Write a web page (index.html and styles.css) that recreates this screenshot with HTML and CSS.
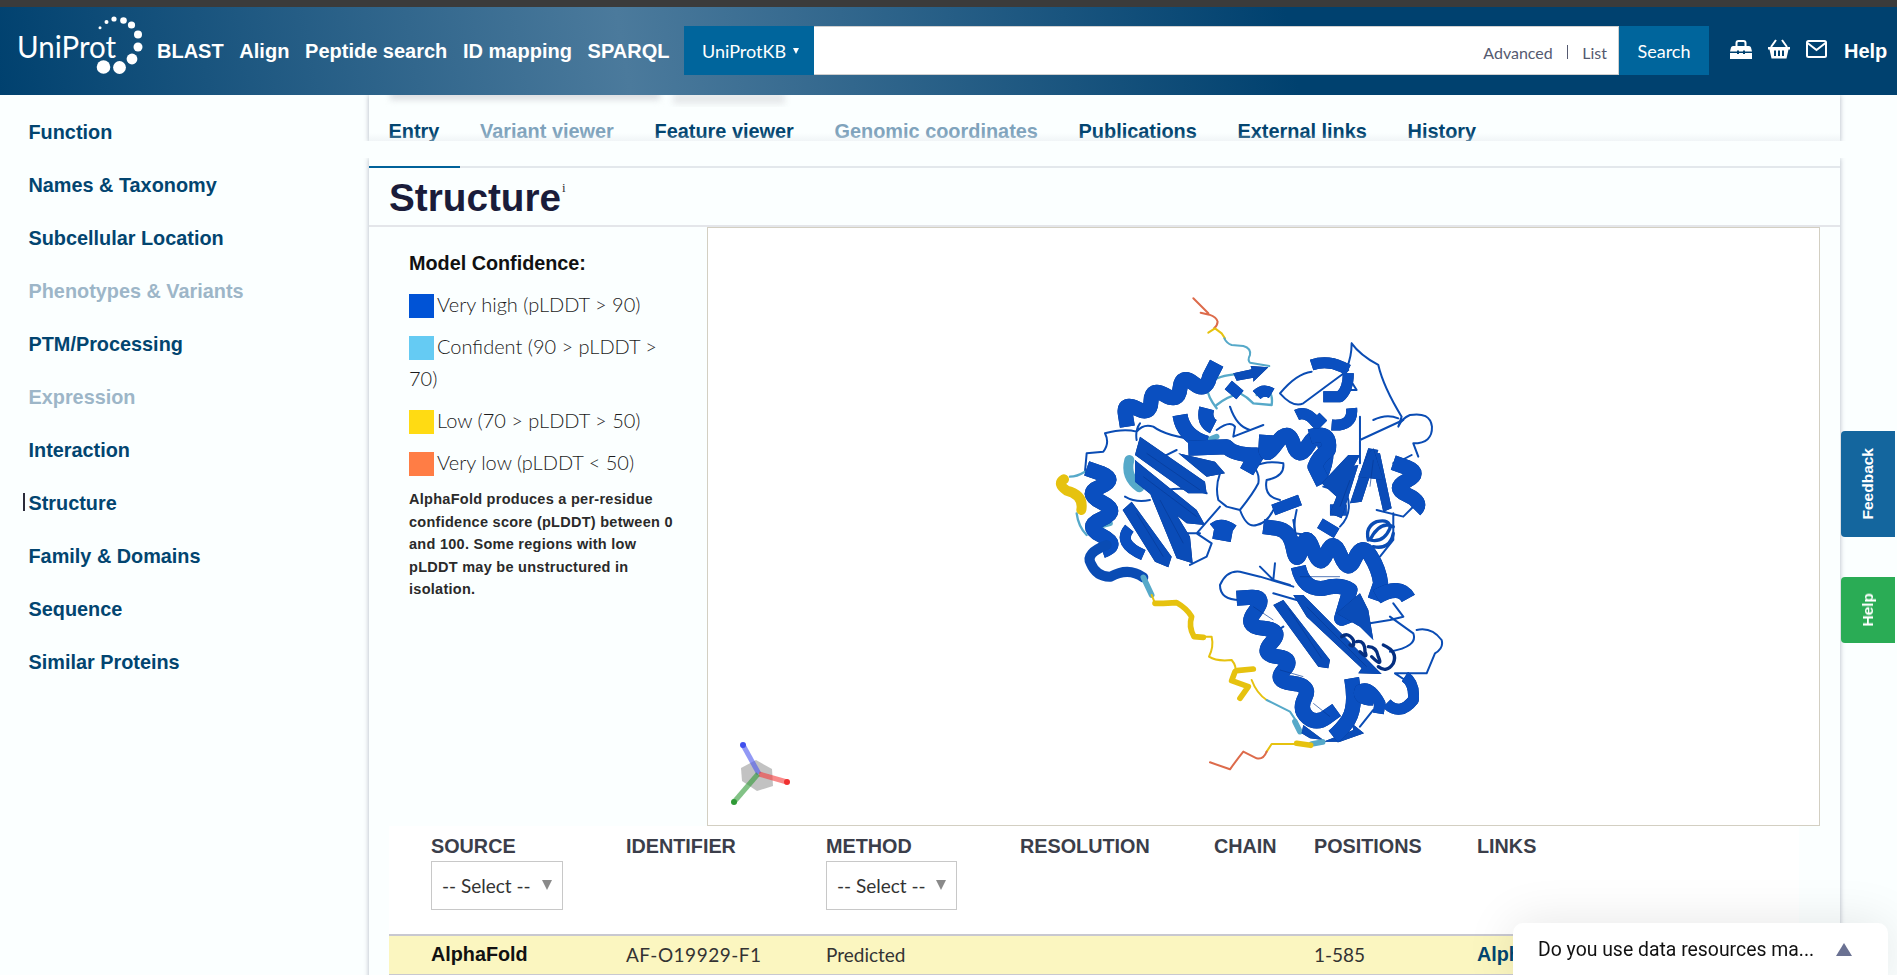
FILE: index.html
```html
<!DOCTYPE html>
<html lang="en">
<head>
<meta charset="utf-8">
<title>UniProt - Structure</title>
<link rel="stylesheet" href="styles.css">
</head>
<body>
<div class="chrome-strip"></div>
<header class="topbar">
  <a class="logo">
    <svg width="150" height="88" viewBox="0 7 150 88">
      <text class="logo-word" x="17" y="58" textLength="99" lengthAdjust="spacingAndGlyphs">UniProt</text>
      <g class="logo-dots">
        <circle cx="100" cy="27.7" r="1.5"/><circle cx="106.5" cy="22" r="2"/><circle cx="114" cy="19" r="2.6"/>
        <circle cx="123.5" cy="20.5" r="3.3"/><circle cx="131.5" cy="25" r="3.6"/><circle cx="138" cy="34.5" r="4"/>
        <circle cx="138" cy="47" r="4.5"/><circle cx="132" cy="59" r="5.4"/><circle cx="119.5" cy="67.5" r="6.4"/><circle cx="103.5" cy="67" r="6.8"/>
      </g>
    </svg>
  </a>
  <nav class="topnav">
    <a>BLAST</a><a>Align</a><a>Peptide search</a><a>ID mapping</a><a>SPARQL</a>
  </nav>
  <div class="search">
    <div class="search-db">UniProtKB <span class="search-caret"></span></div>
    <div class="search-input"><a>Advanced</a><span class="search-sep"></span><a>List</a></div>
    <div class="search-btn">Search</div>
  </div>
  <div class="tools">
    <svg class="tool" width="22" height="19" viewBox="0 0 22 19"><path class="tool-line" d="M6.5 6V3Q6.500 1 8.500 1H13.500Q15.500 1 15.500 3V6"/><path d="M0 11.500L1 7.500Q1.500 6 3 6H19Q20.500 6 21 7.500L22 11.500H15V10.500H13V11.500H9V10.500H7V11.500Z"/><path d="M0 13H7V14H9V13H13V14H15V13H22V19H0Z"/></svg>
    <svg class="tool" width="22" height="20" viewBox="0 0 22 20"><path class="tool-line" d="M8 1L3 8M14 1L19 8"/><path fill-rule="evenodd" d="M0 8H22V10.500H20.500L18.500 19.500H3.500L1.500 10.500H0ZM6 11.500V17H8V11.500ZM10 11.500V17H12V11.500ZM14 11.500V17H16V11.500Z"/></svg>
    <svg class="tool" width="21" height="18" viewBox="0 0 21 18"><rect class="tool-line" x="1" y="1" width="19" height="16" rx="1.500"/><path class="tool-line" d="M1.500 3L10.500 10L19.500 3"/></svg>
    <a class="tool-help">Help</a>
  </div>
</header>

<div class="page">
  <aside class="sidebar">
    <a>Function</a>
    <a>Names &amp; Taxonomy</a>
    <a>Subcellular Location</a>
    <a class="off">Phenotypes &amp; Variants</a>
    <a>PTM/Processing</a>
    <a class="off">Expression</a>
    <a>Interaction</a>
    <a class="current">Structure</a>
    <a>Family &amp; Domains</a>
    <a>Sequence</a>
    <a>Similar Proteins</a>
  </aside>

  <main class="main">
    <div class="tabs-card">
      <div class="blur-row"><span class="blur-a"></span><span class="blur-b"></span></div>
      <div class="tabs">
        <a>Entry</a><a class="off">Variant viewer</a><a>Feature viewer</a><a class="off">Genomic coordinates</a><a>Publications</a><a>External links</a><a>History</a>
      </div>
    </div>

    <section class="section">
      <div class="section-head"><h1>Structure</h1><sup>i</sup></div>
      <div class="section-body">
        <div class="legend">
          <h2>Model Confidence:</h2>
          <p class="legend-row"><span class="swatch vh"></span>Very high (pLDDT &gt; 90)</p>
          <p class="legend-row"><span class="swatch c"></span>Confident (90 &gt; pLDDT &gt; 70)</p>
          <p class="legend-row"><span class="swatch lo"></span>Low (70 &gt; pLDDT &gt; 50)</p>
          <p class="legend-row"><span class="swatch vl"></span>Very low (pLDDT &lt; 50)</p>
          <p class="legend-note">AlphaFold produces a per-residue confidence score (pLDDT) between 0 and 100. Some regions with low pLDDT may be unstructured in isolation.</p>
        </div>
        <div class="viewer">
          <svg class="viewer-svg" width="1111" height="597" viewBox="708 228 1111 597">
            <g transform="translate(1040 280) scale(.3333)">
              <!-- top terminal -->
              <path class="s o" d="M460 55L505 100M482 98L508 104Q530 112 533 125Q532 138 522 145"/>
              <path class="s y" d="M505 158L525 145L545 160L555 175"/>
              <path class="s c2" d="M553 175Q560 190 575 195L610 198Q634 205 630 225Q622 240 630 248L688 258"/>
              <!-- loops -->
              <path class="s b" d="M935 190Q935 230 920 265M935 190Q960 225 1015 255Q1030 320 1085 410L1075 440Q1085 415 1110 405Q1170 395 1176 440Q1178 490 1120 490L1135 530M1000 420Q1040 400 1075 415M720 340Q770 280 815 275M720 340Q760 385 790 370Q870 310 925 270M925 290L950 330L910 330"/>
              <path class="s b" d="M195 460Q210 490 190 515L140 520L135 575M195 460Q250 445 290 455Q310 430 340 440Q380 470 480 480M300 430Q285 450 290 480M530 450Q570 420 585 440L580 470L670 435M570 380Q590 440 630 450M540 580Q525 620 535 660L560 680L600 690Q640 640 655 610Q660 580 640 560Q680 540 730 550Q735 590 680 600Q670 650 720 660M600 690Q620 745 650 735Q680 730 700 690M540 680L470 760L515 790L500 830L450 855M480 760L440 760M770 690Q760 730 765 760L800 765M900 740Q940 700 920 640L850 620M960 480L1090 420M960 410L960 550M1010 690L1090 710L1130 670M1060 700L1060 780L1020 830M330 590L380 630Q440 620 500 640M255 650Q290 670 330 660M410 510L370 530M1115 525Q1090 540 1060 550"/>
              <!-- cyan around top -->
              <path class="s c2 t" d="M530 385Q495 340 505 315Q520 290 582 283M530 375Q560 350 600 340Q620 350 640 370L695 375Q700 340 680 330Q660 330 650 345M110 700Q115 740 140 765M135 575Q110 590 90 590"/>
              <path class="r c" d="M268 540Q255 590 298 622" />
              <path class="r2 c" d="M170 740L210 730M480 490L530 470"/>
              <!-- yellow left -->
              <path class="r y" d="M72 598Q50 612 80 632Q132 645 124 690"/>
              <!-- top arrow -->
              <path class="f" d="M580 280L635 268L632 258L685 262L640 305L640 293L590 302Z"/>
              <!-- helices -->
              <path class="h" d="M262 440L256 402Q250 365 291 386T333 364T375 345T420 325T461 310T509 290L530 250"/>
              <path class="h m" d="M565 315L600 345M650 345Q670 325 695 340"/>
              <path class="h" d="M420 405Q430 470 500 490M500 385Q490 425 520 440"/>
              <path class="h" d="M445 505L560 500Q580 525 650 525Q640 540 620 575"/>
              <path class="h" d="M680 465L678 500Q675 540 710 490T760 492T805 495T852 487T840 590"/>
              <path class="h" d="M810 470Q875 450 865 510Q835 530 825 560L850 610"/>
              <path class="h m" d="M815 255Q860 240 905 260L925 270M925 280Q925 330 900 350L850 350M770 405Q800 390 830 430L850 410M875 435Q940 440 935 385"/>
              <path class="h" d="M1060 548L1100 562Q1145 580 1100 602T1102 645T1125 690"/>
              <path class="h" d="M140 565L183 580Q232 600 181 620T185 667T185 717T185 767T187 812"/>
              <path class="h m" d="M268 745Q230 790 310 825"/>
              <path class="h m" d="M840 730L890 760M520 745Q545 725 580 750M520 760L575 770"/>
              <path class="h m" d="M700 690L780 660M870 690L920 690"/>
              <!-- sheets -->
              <path class="f" d="M300 470L495 605L500 640L445 640L285 525ZM285 540L470 690L495 735L440 730L285 605ZM415 520L525 545L555 580L500 590ZM248 690L275 665L395 830L385 862L345 845ZM330 640L360 622L450 770L458 850L410 835Z"/>
              <path class="f" d="M845 610L925 525L960 525L890 650ZM870 700L925 560L955 555L905 715ZM930 670L985 505L1015 510L965 665ZM1030 695L990 520L1020 520L1055 685Z"/>
              <path class="f" d="M985 520L1000 505L1030 600L955 590Z"/>
              <!-- coil -->
              <path class="s b th" d="M985 780Q975 740 1010 725Q1050 715 1050 745Q1030 790 990 780Q1020 720 1060 740M1000 800Q1050 810 1060 760"/>
              <path class="seam" d="M320 520L480 630M310 590L470 710M290 700L370 830M360 660L430 790M930 600L900 680M1000 540L990 620"/>
            </g>
            <g transform="translate(1040 520) scale(.3333)">
              <!-- long tail -->
              <path class="r b" d="M200 75Q135 100 152 130Q170 172 212 170Q265 140 310 172"/>
              <path class="r2 c" d="M310 172L335 225"/>
              <path class="r2 y" d="M345 250L370 250L410 248Q440 265 455 290Q445 320 462 350L490 352"/>
              <path class="s y" d="M335 225L345 250M490 350L515 350Q522 380 507 410Q530 425 575 420Q592 440 585 460"/>
              <path class="r2 y" d="M590 452L640 447M585 455L575 482L625 500L600 535"/>
              <path class="s y" d="M635 480Q650 520 680 540"/>
              <path class="s c2" d="M680 540L750 575L770 605"/>
              <path class="r2 c" d="M765 605L780 635"/>
              <path class="f" d="M790 615L850 660L810 655L785 640Z"/>
              <path class="f" d="M850 665L940 630L935 610L972 640L900 665Z"/>
              <path class="r2 c" d="M815 672L848 666"/>
              <path class="r2 y" d="M770 670L812 676"/>
              <path class="s y" d="M770 672L695 672L680 695"/>
              <path class="s o" d="M680 695Q670 720 650 715L610 695Q590 720 570 748L510 727"/>
              <!-- lower loops -->
              <path class="s b" d="M600 240Q540 240 540 195Q560 150 600 155L660 170L760 200M770 60L760 0M660 140L700 180L750 195M705 130L700 180M1130 330Q1175 320 1205 360Q1212 385 1185 400L1160 460L1065 460L1095 480M1050 290L1120 340Q1135 380 1050 395M1060 250L1090 290L1050 300L990 310M1000 570L960 620M700 220L770 240M730 320L700 340"/>
              <!-- lower helices -->
              <path class="h" d="M590 235L635 232Q680 230 645 275T670 325T695 367T712 410T732 450T757 490T795 533T803 592T862 590L890 570"/>
              <path class="h" d="M670 20L710 25Q750 30 760 85T785 85T820 90T860 100T902 107T945 115T992 108T1022 190L1005 240"/>
              <path class="h" d="M775 140Q790 210 850 205Q900 190 930 210L905 295L970 270M1010 230Q1080 190 1105 235"/>
              <path class="h" d="M935 475Q950 560 925 600Q905 630 880 650"/>
              <path class="h m" d="M1000 540Q950 540 960 510Q990 495 1020 550L1015 580M1040 550Q1080 590 1120 540Q1125 490 1095 470"/>
              <!-- sheets lower -->
              <path class="f" d="M700 255L730 240L870 420L865 445L835 440Z"/>
              <path class="f" d="M760 225L790 225L1025 462L955 460L965 445L800 290Z"/>
              <path class="f" d="M890 280L960 220L985 270L1000 360L960 320Z"/>
              <!-- dark coil -->
              <path class="s dk" d="M905 350Q925 335 940 360Q945 385 930 375M950 365Q975 360 975 395Q985 420 960 395M985 380Q1010 380 1015 410Q1030 445 995 410M1030 375Q1075 395 1060 430Q1040 460 1015 440"/>
              <path class="seam" d="M745 265L845 415M800 260L980 440M780 170L900 170M700 300L640 260M720 450L790 470M820 550L870 590"/>
            </g>
            <!-- axes -->
            <g class="axes">
              <polygon class="ax-cube" points="756,760 772,769 773,786 757,791 742,781 741,768"/>
              <path class="ax-b" d="M743 745L759 774"/>
              <path class="ax-r" d="M759 774L787 782"/>
              <path class="ax-g" d="M758 774L734 802"/>
              <circle class="dot-b" cx="743" cy="745" r="3"/><circle class="dot-r" cx="787" cy="782" r="3"/><circle class="dot-g" cx="734" cy="802" r="3"/>
            </g>
          </svg>
        </div>
      </div>
      <div class="table">
        <div class="thead">
          <div class="th">SOURCE<div class="select">-- Select --<span class="select-caret"></span></div></div>
          <div class="th">IDENTIFIER</div>
          <div class="th">METHOD<div class="select narrow">-- Select --<span class="select-caret"></span></div></div>
          <div class="th">RESOLUTION</div>
          <div class="th">CHAIN</div>
          <div class="th">POSITIONS</div>
          <div class="th">LINKS</div>
        </div>
        <div class="trow">
          <div class="strong">AlphaFold</div>
          <div class="wide">AF-O19929-F1</div>
          <div>Predicted</div>
          <div></div>
          <div></div>
          <div>1-585</div>
          <div class="tlink">AlphaFold</div>
        </div>
      </div>
    </section>
  </main>
</div>

<a class="side-tab feedback"><span>Feedback</span></a>
<a class="side-tab help"><span>Help</span></a>
<div class="survey"><span>Do you use data resources ma...</span><span class="survey-caret"></span></div>
</body>
</html>
```
FILE: styles.css
```css
* { box-sizing: border-box; }
html, body { margin: 0; height: 100%; overflow: hidden; }
body { font-family: "Liberation Sans", Arial, sans-serif; background: #fbffff; color: #222; }
a { color: inherit; text-decoration: none; }

.chrome-strip { height: 7px; background: #3b3b3b; }

.topbar { height: 88px; display: flex; align-items: center; color: #fff;
  background: linear-gradient(80deg, #00416f 0%, #4b7a9c 33%, #00416f 68%, #00416f 100%); }
.logo { display: block; width: 150px; height: 88px; flex: none; }
.logo-word { font-family: Lato, sans-serif; font-size: 31px; fill: #fff; }
.logo-dots { fill: #fff; }
.topnav { display: flex; gap: 15.700px; margin-left: 7px; font-size: 20px; font-weight: 700; width: 527px; flex: none; }

.search { display: flex; height: 49px; width: 1025px; flex: none; font-family: Lato, sans-serif; position: relative; top: -.5px; }
.search-db { width: 130px; background: #00659c; display: flex; align-items: center; padding-left: 18px; font-size: 18px; gap: 7px; }
.search-caret { width: 0; height: 0; border-left: 3.500px solid transparent; border-right: 3.500px solid transparent; border-top: 6px solid #fff; }
.search-input { flex: 1; background: #fff; border: 1px solid #cfcfcf; border-left: 0; display: flex; justify-content: flex-end; align-items: center; padding: 4px 11px 0 0; font-size: 16px; color: #555a70; }
.search-sep { width: 1.500px; height: 14px; background: #555a70; margin: 0 14px; position: relative; top: -1px; }
.search-btn { width: 90px; background: #00659c; display: flex; align-items: center; justify-content: center; font-size: 18px; }

.tools { display: flex; align-items: center; margin-left: 21px; position: relative; top: -2px; }
.tool { fill: #fff; margin-right: 16px; flex: none; }
.tool-line { fill: none; stroke: #fff; stroke-width: 2; }
.tool-help { font-size: 20px; font-weight: 700; margin-left: 1px; padding-top: 4px; }

.page { display: flex; height: 880px; }

.sidebar { width: 369px; flex: none; padding-top: 10.500px; display: flex; flex-direction: column; }
.sidebar a { height: 53.100px; flex: none; line-height: 53px; padding-left: 28.500px; font-size: 19.850px; font-weight: 700; color: #024570; position: relative; }
.sidebar a.off { color: #9db6c8; }
.sidebar a.current::before { content: ""; position: absolute; left: 23px; top: 16px; width: 1.500px; height: 18px; background: #2b2b3a; }

.main { width: 1471px; flex: none; }

.tabs-card { height: 48px; background: #fbffff; box-shadow: 0 0 5px rgba(40, 50, 80, .35); position: relative; clip-path: inset(0 -8px 2px -8px); display: flex; flex-direction: column; }
.tabs-card::after { content: ""; position: absolute; left: 0; right: 0; bottom: 0; height: 10px; background: linear-gradient(to bottom, rgba(225, 230, 235, 0), rgba(225, 230, 235, .5)); }
.blur-row { height: 12px; display: flex; padding-left: 21px; gap: 13px; overflow: hidden; flex: none; }
.blur-a { width: 270px; height: 10px; margin-top: -5px; background: #dcdfe2; filter: blur(3px); }
.blur-b { width: 112px; height: 12px; margin-top: -3px; background: #e6e9eb; filter: blur(3px); }
.tabs { display: flex; gap: 40.700px; padding: 10px 0 0 19.500px; font-size: 19.900px; font-weight: 700; color: #024570; line-height: 28px; }
.tabs .off { color: #7fa3bc; }

.section { margin-top: 15px; padding-top: 8px; background: #fbffff; box-shadow: 0 0 5px rgba(40, 50, 80, .35); clip-path: inset(0 -8px 0 -8px); height: 828px; }
.section-head { height: 61px; border-top: 2px solid #e3e8ec; border-bottom: 2px solid #e4e6ea; display: flex; align-items: flex-start; padding-left: 20px; position: relative; }
.section-head::before { content: ""; position: absolute; left: 0; top: -2px; width: 91px; height: 2px; background: #00629a; }
.section-head h1 { margin: 8px 0 0; font-size: 38.700px; line-height: 44px; font-weight: 700; color: #1a1c3a; }
.section-head sup { font-family: "Liberation Serif", serif; font-size: 13px; line-height: 14px; margin: 13px 0 0 1px; color: #333; }

.section-body { display: flex; height: 599px; padding-right: 20px; }
.legend { width: 338px; flex: none; padding: 24px 30px 0 40px; }
.legend h2 { margin: 0 0 13px; font-size: 19.800px; line-height: 24px; font-weight: 700; color: #111; }
.legend-row { margin: 0 0 10px; font-family: Lato, sans-serif; font-weight: 300; font-size: 20px; line-height: 32px; color: #1c1c1c; }
.swatch { display: inline-block; width: 25px; height: 24px; vertical-align: middle; margin: -2px 3px 0 0; }
.swatch.vh { background: #0053d6; }
.swatch.c { background: #65cbf3; }
.swatch.lo { background: #ffdb13; }
.swatch.vl { background: #ff7d45; }
.legend-note { margin: 0; font-size: 14.500px; line-height: 22.500px; font-weight: 700; color: #2a2a2a; letter-spacing: .27px; }

.viewer { flex: 1; background: #fff; border: 1px solid #d3cfc2; }
.viewer-svg { display: block; }
.s { fill: none; stroke-width: 6; stroke-linecap: round; stroke-linejoin: round; }
.s.t { stroke-width: 7; }
.s.th { stroke-width: 10; }
.s.dk { stroke: #052f80; stroke-width: 10; }
.r { fill: none; stroke-width: 30; stroke-linecap: round; stroke-linejoin: round; }
.r2 { fill: none; stroke-width: 17; stroke-linecap: round; stroke-linejoin: round; }
.b { stroke: #0a4cb4; }
.c, .c2 { stroke: #56a9c9; }
.y { stroke: #e6c20f; }
.o { stroke: #dd6b4b; }
.h { fill: none; stroke: #0a4fc0; stroke-width: 45; stroke-linejoin: round; stroke-linecap: butt; filter: drop-shadow(0 0 1px #04307f); }
.h.m { stroke-width: 33; }
.f { fill: #0a4cb8; filter: drop-shadow(0 0 1px #04307f); }
.seam { fill: none; stroke: #063a96; stroke-width: 2; }
.ax-cube { fill: #9a9a9a; opacity: .6; }
.axes path { fill: none; stroke-width: 5; opacity: .6; }
.ax-b { stroke: #4a55ee; }
.ax-r { stroke: #f53a3a; }
.ax-g { stroke: #2f9a36; }
.dot-b { fill: #4050ee; }
.dot-r { fill: #f03030; }
.dot-g { fill: #2f9a36; }

.table { margin: 0 41px 0 20px; background: #fff; }
.thead, .trow { display: grid; grid-template-columns: 195px 200px 194px 194px 100px 163px 1fr; padding-left: 42px; }
.thead { height: 108px; padding-top: 8px; }
.th { font-size: 19.800px; line-height: 24px; font-weight: 700; color: #3b3e4a; }
.select { width: 132px; height: 49px; margin-top: 3px; border: 1px solid #c8c8c8; background: #fff; display: flex; align-items: center; padding: 0 10px; justify-content: space-between; font-family: Lato, sans-serif; font-weight: 400; font-size: 19px; color: #333; }
.select.narrow { width: 131px; }
.select-caret { width: 0; height: 0; border-left: 5px solid transparent; border-right: 5px solid transparent; border-top: 10px solid #8a8a8a; margin-top: -1px; }
.trow { height: 42px; padding-bottom: 2px; background: #fbf6c0; border-top: 2px solid #c8c8d0; border-bottom: 2px solid #c8c8d0; align-items: center; font-family: Lato, sans-serif; font-size: 19px; color: #333; }
.wide { letter-spacing: .5px; }
.strong { font-family: "Liberation Sans", Arial, sans-serif; font-weight: 700; font-size: 19.800px; color: #111; }
.tlink { font-family: "Liberation Sans", Arial, sans-serif; font-weight: 700; font-size: 19.800px; color: #024570; }

.side-tab { position: fixed; left: 1841px; width: 54px; display: flex; align-items: center; justify-content: center; border-radius: 4px 0 0 4px; color: #fff; font-size: 15.500px; font-weight: 700; }
.side-tab span { writing-mode: vertical-rl; transform: rotate(180deg); }
.feedback { top: 431px; height: 106px; background: #14669e; }
.help { top: 577px; height: 66px; background: #2aac55; }

.survey { position: fixed; left: 1513px; top: 923px; width: 375px; height: 60px; background: #fff; border-radius: 10px 10px 0 0; box-shadow: 0 0 50px rgba(0, 0, 0, .1); display: flex; align-items: flex-start; padding: 15px 0 0 25px; font-family: Roboto, sans-serif; font-size: 19.400px; line-height: 24px; color: #111; }
.survey-caret { width: 0; height: 0; margin: 5px 0 0 22px; border-left: 8px solid transparent; border-right: 8px solid transparent; border-bottom: 13px solid #6a7192; }
```
